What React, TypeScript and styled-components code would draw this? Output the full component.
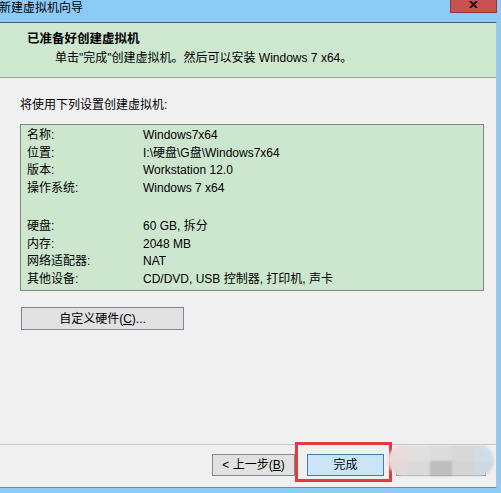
import React from "react";
import styled, { createGlobalStyle } from "styled-components";

const GlobalStyle = createGlobalStyle`
  html, body {
    margin: 0;
    padding: 0;
    background: #8ccbf6;
  }
  body {
    font-family: "Liberation Sans", "Noto Sans CJK SC", sans-serif;
    font-size: 12px;
    color: #000;
  }
`;

type Setting = { label: string; value: string } | null;

const settings: Setting[] = [
  { label: "名称:", value: "Windows7x64" },
  { label: "位置:", value: "I:\\硬盘\\G盘\\Windows7x64" },
  { label: "版本:", value: "Workstation 12.0" },
  { label: "操作系统:", value: "Windows 7 x64" },
  null,
  { label: "硬盘:", value: "60 GB, 拆分" },
  { label: "内存:", value: "2048 MB" },
  { label: "网络适配器:", value: "NAT" },
  { label: "其他设备:", value: "CD/DVD, USB 控制器, 打印机, 声卡" },
];

const mosaic = [
  "#e8dbdb", "#e0e0e0", "#dcdcdc", "#d8d8d8", "#d2dce4",
  "#e4d8d8", "#dadada", "#bdbdbd", "#d4d4d4", "#cdd8e1",
];

const App = () => {
  return (
    <>
      <GlobalStyle />
      <Window>
        <TitleBar>
          <Caption>新建虚拟机向导</Caption>
          <CloseButton>
            <svg width="9" height="7" viewBox="0 0 9 7">
              <path d="M1 0 L8 7 M8 0 L1 7" stroke="#1a1a1a" strokeWidth="2" />
            </svg>
          </CloseButton>
        </TitleBar>
        <Client>
          <Header>
            <HeaderTitle>已准备好创建虚拟机</HeaderTitle>
            <HeaderText>单击"完成"创建虚拟机。然后可以安装 Windows 7 x64。</HeaderText>
          </Header>
          <Body>
            <Intro>将使用下列设置创建虚拟机:</Intro>
            <SummaryBox>
              {settings.map((s, i) =>
                s ? (
                  <Row key={i}>
                    <span>{s.label}</span>
                    <span>{s.value}</span>
                  </Row>
                ) : (
                  <Gap key={i} />
                )
              )}
            </SummaryBox>
            <WideButton>
              自定义硬件(<u>C</u>)...
            </WideButton>
          </Body>
          <Footer>
            <Button $width={83}>&lt; 上一步(<u>B</u>)</Button>
            <Button $width={77} $primary $ml={12}>完成</Button>
            <Button $width={90} $ml={12}>取消</Button>
          </Footer>
        </Client>
        <Highlight />
        <Mosaic>
          {mosaic.map((c, i) => (
            <span key={i} style={{ background: c }} />
          ))}
        </Mosaic>
      </Window>
    </>
  );
};

const Window = styled.div`
  position: relative;
  width: 501px;
  height: 493px;
  background: #8ccbf6;
  display: flex;
  flex-direction: column;
  overflow: hidden;
`;

const TitleBar = styled.div`
  height: 22px;
  display: flex;
  justify-content: space-between;
  align-items: flex-start;
`;

const Caption = styled.div`
  margin-left: -1px;
  padding-top: 1px;
  line-height: 14px;
  font-size: 12px;
`;

const CloseButton = styled.div`
  width: 47px;
  height: 13px;
  margin-right: 4px;
  background: #c75050;
  border: 1px solid #8f3a3a;
  border-top: none;
  box-sizing: border-box;
  display: flex;
  justify-content: center;
  align-items: flex-start;
  padding-top: 1px;
`;

const Client = styled.div`
  flex: 1;
  margin: 0 4px 5px 0;
  background: #f0f0f0;
  border-top: 1px solid #4d5a66;
  border-right: 1px solid #b8c4cc;
  border-bottom: 1px solid #6f8a9e;
  display: flex;
  flex-direction: column;
`;

const Header = styled.div`
  height: 55px;
  background: #cde8cf;
  border-bottom: 1px solid #9aa39c;
  box-sizing: border-box;
  padding: 9px 0 0 27px;
`;

const HeaderTitle = styled.div`
  font-weight: bold;
  font-size: 12.5px;
  line-height: 14px;
`;

const HeaderText = styled.div`
  margin: 5px 0 0 28px;
  font-size: 12px;
  line-height: 14px;
`;

const Body = styled.div`
  padding: 19px 0 0 20px;
  flex: 1;
`;

const Intro = styled.div`
  line-height: 16px;
`;

const SummaryBox = styled.div`
  margin-top: 11px;
  width: 464px;
  height: 167px;
  box-sizing: border-box;
  background: #cde7cf;
  border: 1px solid #7f8983;
  padding: 2px 6px 0;
`;

const Row = styled.div`
  display: grid;
  grid-template-columns: 116px 1fr;
  height: 17.6px;
  line-height: 17.6px;
`;

const Gap = styled.div`
  height: 20.6px;
`;

const WideButton = styled.div`
  margin: 16px 0 0 1px;
  width: 163px;
  height: 23px;
  box-sizing: border-box;
  background: #e1e1e1;
  border: 1px solid #7a8796;
  display: flex;
  align-items: center;
  justify-content: center;
  line-height: 14px;
`;

const Footer = styled.div`
  border-top: 1px solid #c5c9cc;
  height: 43px;
  box-sizing: border-box;
  padding: 9px 0 0 212px;
  display: flex;
  align-items: flex-start;
`;

const Button = styled.div<{ $width: number; $primary?: boolean; $ml?: number }>`
  width: ${(p) => p.$width}px;
  height: 22px;
  margin-left: ${(p) => p.$ml ?? 0}px;
  box-sizing: border-box;
  background: ${(p) => (p.$primary ? "#cce4f7" : "#e1e1e1")};
  border: 1px solid ${(p) => (p.$primary ? "#3c7fb1" : "#7a8796")};
  display: flex;
  align-items: center;
  justify-content: center;
  line-height: 14px;
`;

// red marker drawn round the finish button
const Highlight = styled.div`
  position: absolute;
  left: 295px;
  top: 442px;
  width: 97px;
  height: 40px;
  box-sizing: border-box;
  border: 3px solid #e23a3e;
`;

// pixelated patch covering the cancel button
const Mosaic = styled.div`
  position: absolute;
  left: 388px;
  top: 445px;
  width: 106px;
  height: 31px;
  border-radius: 15px;
  overflow: hidden;
  display: grid;
  grid-template-columns: repeat(5, 1fr);
  grid-template-rows: repeat(2, 1fr);
  filter: blur(0.8px);
`;

export default App;
